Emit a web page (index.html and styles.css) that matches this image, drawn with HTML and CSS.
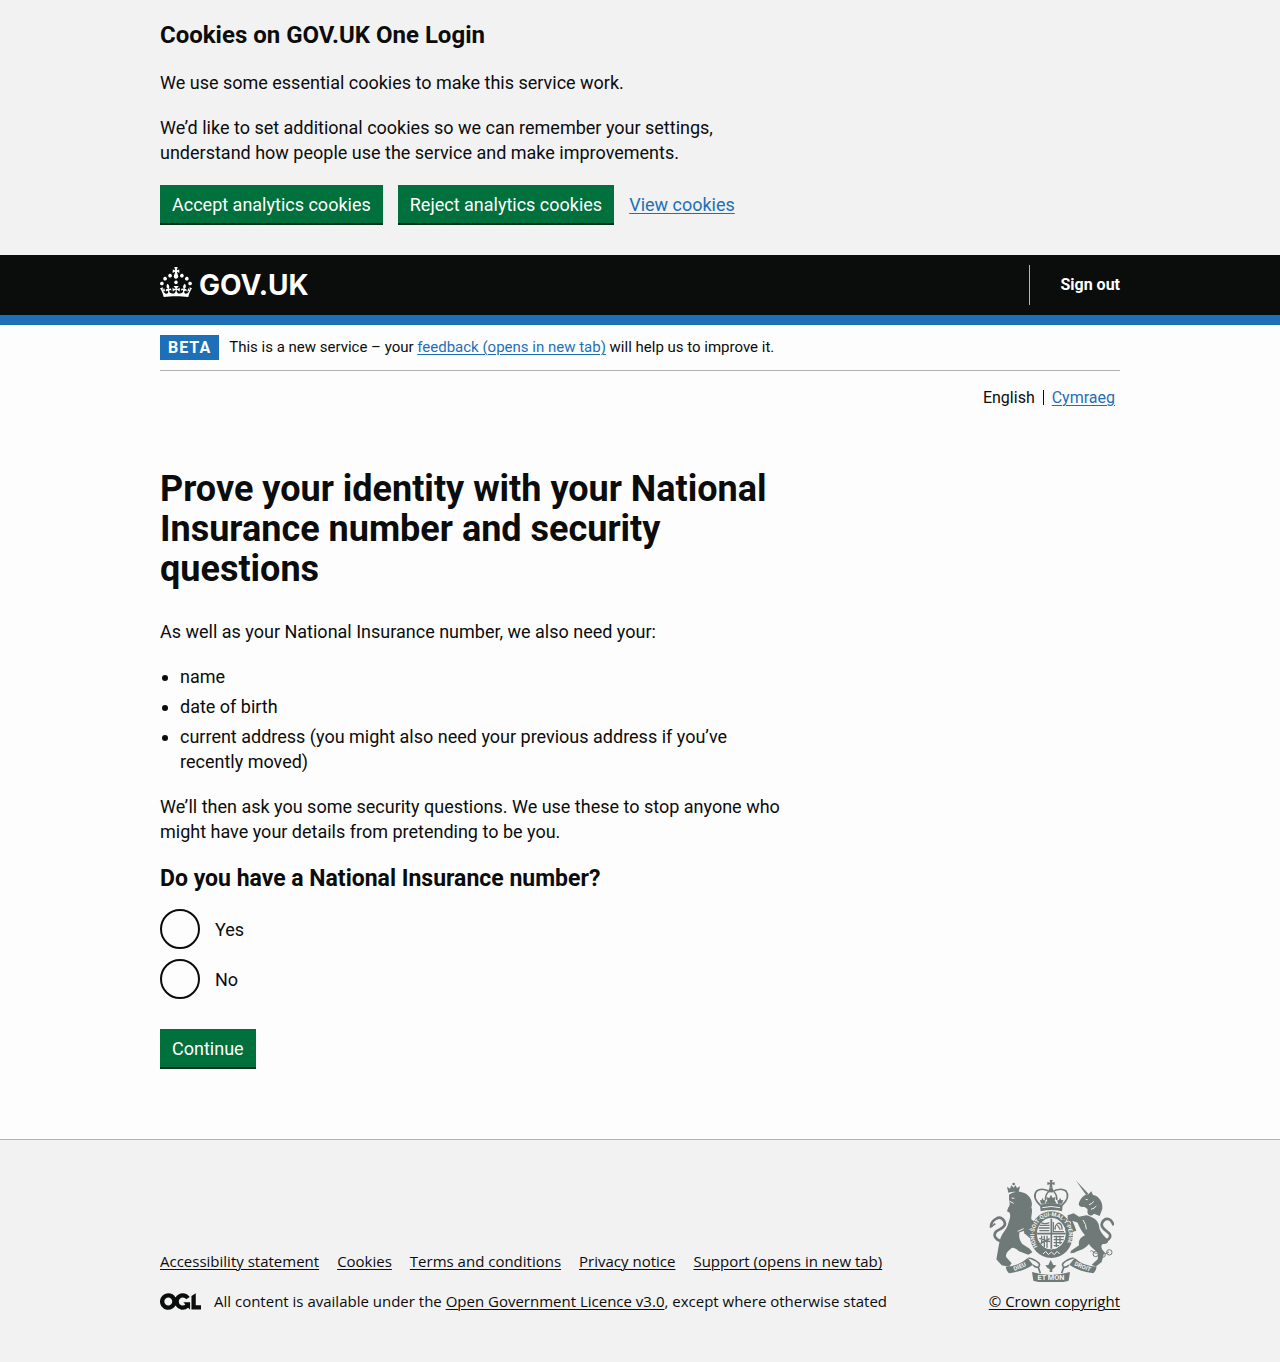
FILE: index.html
```html
<!DOCTYPE html>
<html lang="en">
<head>
<meta charset="utf-8">
<meta name="viewport" content="width=device-width, initial-scale=1">
<title>Prove your identity with your National Insurance number and security questions – GOV.UK One Login</title>
<link rel="stylesheet" href="styles.css">
</head>
<body>
<section class="cookie-banner" aria-label="Cookies on GOV.UK One Login">
  <div class="container">
    <div class="two-thirds">
      <h2 class="heading-m">Cookies on GOV.UK One Login</h2>
      <p>We use some essential cookies to make this service work.</p>
      <p>We’d like to set additional cookies so we can remember your settings, understand how people use the service and make improvements.</p>
    </div>
    <div class="button-group">
      <button type="button" class="button">Accept analytics cookies</button>
      <button type="button" class="button">Reject analytics cookies</button>
      <a class="link" href="#cookies">View cookies</a>
    </div>
  </div>
</section>

<header class="header">
  <div class="container header-inner">
    <a class="logo" href="#home" aria-label="GOV.UK">
      <svg class="logo-crown" viewBox="0 0 32 30" width="32" height="30" aria-hidden="true"><path fill="currentColor" d="M22.6 10.4c-1 .4-2-.1-2.4-1-.4-.9.1-2 1-2.4.9-.4 2 .1 2.4 1s-.1 2-1 2.4m-5.9 6.7c-.9.4-2-.1-2.4-1-.4-.9.1-2 1-2.4.9-.4 2 .1 2.4 1s-.1 2-1 2.4m10.8-3.7c-1 .4-2-.1-2.4-1-.4-.9.1-2 1-2.4.9-.4 2 .1 2.4 1s0 2-1 2.4m3.3 4.8c-1 .4-2-.1-2.4-1-.4-.9.1-2 1-2.4.9-.4 2 .1 2.4 1s-.1 2-1 2.4M17 4.7l2.3 1.2V2.5l-2.3.7-.2-.2.9-3h-3.4l.9 3-.2.2c-.1.1-2.3-.7-2.3-.7v3.4L15 4.7c.1.1.1.2.2.2l-1.3 4c-.1.2-.1.4-.1.6 0 1.1.8 2 1.9 2.2h.7c1-.2 1.9-1.1 1.9-2.1 0-.2 0-.4-.1-.6l-1.3-4c-.1-.2 0-.2.1-.3m-7.6 5.7c.9.4 2-.1 2.4-1 .4-.9-.1-2-1-2.4-.9-.4-2 .1-2.4 1s0 2 1 2.4m-5 3c.9.4 2-.1 2.4-1 .4-.9-.1-2-1-2.4-.9-.4-2 .1-2.4 1s.1 2 1 2.4m-3.2 4.8c.9.4 2-.1 2.4-1 .4-.9-.1-2-1-2.4-.9-.4-2 .1-2.4 1s0 2 1 2.4m14.8 11c4.4 0 8.6.3 12.3.8 1.1-4.5 2.4-7 3.7-8.8l-2.5-.9c.2 1.3.3 1.9 0 2.7-.4-.4-.8-1.1-1.1-2.3l-1.2 4c.7-.5 1.3-.8 2-.9-1.1 2.5-2.6 3.1-3.5 3-1.1-.2-1.7-1.2-1.5-2.1.3-1.2 1.5-1.5 2.1-.1 1.1-2.3-.8-3-2-2.3 1.9-1.9 2.1-3.5.6-5.6-2.1 1.6-2.1 3.2-1.2 5.5-1.2-1.4-3.2-.6-2.5 1.6.9-1.4 2.1-.5 1.9.8-.2 1.1-1.7 2.1-3.5 1.9-2.7-.2-2.9-2.1-2.9-3.6.7-.1 1.9.5 2.9 1.9l.4-4.3c-1.1 1.1-2.1 1.4-3.2 1.4.4-1.2 2.1-3 2.1-3h-5.4s1.7 1.9 2.1 3c-1.1 0-2.1-.2-3.2-1.4l.4 4.3c1-1.4 2.2-2 2.9-1.9-.1 1.5-.2 3.4-2.9 3.6-1.9.2-3.4-.8-3.5-1.9-.2-1.3 1-2.2 1.9-.8.7-2.3-1.2-3-2.5-1.6.9-2.2.9-3.9-1.2-5.5-1.5 2-1.3 3.7.6 5.6-1.2-.7-3.1 0-2 2.3.6-1.4 1.8-1.1 2.1.1.2.9-.3 1.9-1.5 2.1-.9.2-2.4-.5-3.5-3 .6 0 1.2.3 2 .9l-1.2-4c-.3 1.1-.7 1.9-1.1 2.3-.3-.8-.2-1.4 0-2.7l-2.9.9C1.3 23 2.6 25.5 3.7 30c3.7-.5 7.9-.8 12.3-.8"/></svg>
      <span class="logo-text">GOV.UK</span>
    </a>
    <nav class="header-nav" aria-label="Account"><a href="#sign-out">Sign out</a></nav>
  </div>
</header>

<div class="container">
  <div class="phase-banner">
    <strong class="tag">BETA</strong>
    <span>This is a new service – your <a class="link" href="#feedback">feedback (opens in new tab)</a> will help us to improve it.</span>
  </div>
  <nav aria-label="Language">
    <ul class="languages">
      <li>English</li>
      <li><a class="link" href="#cy" lang="cy">Cymraeg</a></li>
    </ul>
  </nav>

  <main class="main two-thirds">
    <h1>Prove your identity with your National Insurance number and security questions</h1>
    <p>As well as your National Insurance number, we also need your:</p>
    <ul class="bullets">
      <li>name</li>
      <li>date of birth</li>
      <li>current address (you might also need your previous address if you’ve recently moved)</li>
    </ul>
    <p>We’ll then ask you some security questions. We use these to stop anyone who might have your details from pretending to be you.</p>
    <form>
      <fieldset>
        <legend>Do you have a National Insurance number?</legend>
        <div class="radio"><input type="radio" name="nino" id="nino-yes" value="yes"><label for="nino-yes">Yes</label></div>
        <div class="radio"><input type="radio" name="nino" id="nino-no" value="no"><label for="nino-no">No</label></div>
      </fieldset>
      <button type="button" class="button">Continue</button>
    </form>
  </main>
</div>

<footer class="footer">
  <div class="container footer-inner">
    <div class="footer-main">
      <ul class="footer-links">
        <li><a href="#accessibility">Accessibility statement</a></li>
        <li><a href="#cookies">Cookies</a></li>
        <li><a href="#terms">Terms and conditions</a></li>
        <li><a href="#privacy">Privacy notice</a></li>
        <li><a href="#support">Support (opens in new tab)</a></li>
      </ul>
      <div class="licence">
        <svg class="ogl" viewBox="0 0 483.2 195.7" width="41" height="17" aria-hidden="true"><path fill="currentColor" d="M421.5 142.8V.1l-50.7 32.3v161.1h112.4v-50.7zm-122.3-9.6A47.12 47.12 0 0 1 221 97.8c0-26 21.1-47.1 47.1-47.1 16.7 0 31.4 8.7 39.7 21.8l42.7-27.2A97.63 97.63 0 0 0 268.1 0c-36.5 0-68.3 20.1-85.1 49.7A98 98 0 0 0 97.8 0C43.9 0 0 43.9 0 97.8s43.9 97.8 97.8 97.8c36.5 0 68.3-20.1 85.1-49.7a97.76 97.76 0 0 0 149.6 25.4l19.4 22.2h3v-87.8h-80l24.3 27.5zM97.8 145c-26 0-47.1-21.1-47.1-47.1s21.1-47.1 47.1-47.1 47.1 21.1 47.1 47.1S123.8 145 97.8 145"/></svg>
        <span>All content is available under the <a href="#licence">Open Government Licence v3.0</a>, except where otherwise stated</span>
      </div>
    </div>
    <a class="copyright" href="#copyright">
      <svg class="arms" viewBox="30 30 375 306" width="125" height="102" aria-hidden="true">
        <defs>
          <path id="garter" d="M176 230A52 57 0 1 1 259 230"/>
        </defs>
        <!-- lion -->
        <g class="arms-fill">
          <path d="M88 68l-4-18 9 6 4-10 7 7 5-8 5 9 9-5-4 18q-16-4-31 1z"/>
          <circle cx="104" cy="42" r="4"/>
          <path d="M90 74C104 63 126 63 138 70C156 80 162 98 157 112C162 124 156 136 157 148L172 160L158 172C152 180 134 184 122 186C118 200 122 212 130 222L152 236L160 247L148 254L120 244C112 236 104 232 98 234C86 244 78 252 82 262L98 280L90 290L68 286L52 268C56 250 58 230 62 214C66 190 84 180 88 160C92 146 96 140 92 128L84 124L88 112C94 108 92 96 90 88Z"/>
          <path d="M132 168L158 182L166 200L152 204L136 190Z"/>
        </g>
        <g class="arms-line">
          <path class="arms-tail" d="M66 214c-16-6-24-16-16-28 8-9 26-10 28-24-1-14-14-24-26-16-12 6-16 14-16 24"/>
          <path d="M33 173l16-12"/>
        </g>
        <path class="arms-cut" d="M92 94l12 6M98 84l8 1M116 184l18-8"/>
        <!-- unicorn -->
        <g class="arms-fill">
          <path d="M290 31l38 40-6 5z"/>
          <path d="M299 102C304 84 316 74 328 73L337 64L342 75C360 78 372 96 370 116L362 138L345 131C335 142 322 136 326 118L316 110C308 112 300 110 299 102Z"/>
          <path d="M266 136L284 130L300 140L322 136C340 140 358 150 360 168C362 184 372 196 384 206C392 216 384 222 372 222C364 226 366 236 376 246L368 276L350 290L338 284L356 268L358 248C346 240 336 232 330 222L322 230C310 240 300 240 286 248L274 250L276 242L300 226C298 212 304 202 318 196C308 184 300 170 296 158L280 152L286 166L292 182L280 186L274 170L276 156L266 150Z"/>
        </g>
        <g class="arms-line">
          <path class="arms-tail" d="M370 216c16-4 28-12 22-24-8-10-22-14-24-26 0-14 12-22 22-18 6 2 10 8 14 18"/>
          <path class="arms-chain" d="M334 244c6-6 10 6 18 6s10-4 18 0 12 0 20-4"/>
          <circle class="arms-chain" cx="350" cy="252" r="8"/>
          <circle class="arms-chain" cx="371" cy="254" r="8"/>
          <circle class="arms-chain" cx="391" cy="247" r="8"/>
        </g>
        <path class="arms-cut" d="M330 104q10-2 14-10M336 118q10-2 16-10M320 88l6 1M312 150q10 14 10 28"/>
        <!-- crown -->
        <g class="arms-fill">
          <path d="M212 30h9l-2 8 8-2v9l-8-2 2 10h-10l2-10-8 2v-9l9 2z"/>
          <circle cx="216" cy="60" r="7"/>
          <path d="M183 104q34-9 68 0l-2 20q-32-8-64 0z"/>
          <path d="M216 74l5 10 9-3-3 10 6 10h-34l6-10-3-10 9 3zM190 83l4 8 6-1-2 11h-12l-3-11 5 1zM243 83l4 8 6-1-4 11h-12l-2-11 5 1z"/>
        </g>
        <path class="arms-line" d="M184 106q-26-25-11-43 16-12 42 3M249 106q26-25 12-43-16-12-44 3M208 66q-10 10-8 24M225 66q10 10 8 24"/>
        <path class="arms-cut" d="M190 113q26-7 53 0"/>
        <!-- garter and shield -->
        <ellipse class="arms-fill" cx="217" cy="194" rx="65" ry="70"/>
        <text class="arms-motto arms-garter"><textPath href="#garter">HONI·SOIT·QUI·MAL·Y·PENSE</textPath></text>
        <ellipse class="arms-shield" cx="217" cy="191" rx="42" ry="46"/>
        <path class="arms-line" d="M217 146v90M174 191h86"/>
        <path class="arms-detail" d="M182 166h30M179 174h33M181 182h30M186 158q12 6 25 0M223 156v29h32M229 179q-3-14 10-20 11 4 10 20M235 165l9 14M188 197v26M196 197v34M204 197v36M181 205l32 10M184 220l28-14M224 200h31M224 209h30M224 218h25M224 227h16M232 197v34M243 197v26"/>
        <path class="arms-cut" d="M192 252l8-8 8 10 9-8 9 8 8-10 8 8"/>
        <!-- mottoes on the scroll -->
        <g class="arms-fill">
          <path d="M80 290q38 0 66-26l16 20q-28 20-72 26-8-8-10-20z"/>
          <path d="M353 290q-38 0-66-26l-16 20q28 20 72 26 8-8 10-20z"/>
          <path d="M159 306q57 18 114 0l-4 26q-53 15-106 0z"/>
          <path d="M215 270l8 15 9 1-7 9-5 2v9h-8v-9l-6-2-7-9 9-1z"/>
        </g>
        <path class="arms-line" d="M148 264q20 4 32 16 4 8-4 12-8 0-14-7M284 264q-20 4-32 16-4 8 4 12 8 0 14-7M178 292l6 18M254 292l-6 18"/>
        <text class="arms-motto" transform="rotate(-22 122 290)" x="122" y="296">DIEU</text>
        <text class="arms-motto" transform="rotate(22 311 290)" x="311" y="296">DROIT</text>
        <text class="arms-motto arms-motto-large" x="216" y="331">ET MON</text>
      </svg>
      <span>© Crown copyright</span>
    </a>
  </div>
</footer>
</body>
</html>
```
FILE: styles.css
```css
:root {
  --text: #0b0c0c;
  --link: #1d70b8;
  --green: #00703c;
  --panel: #f2f2f2;
  --arms: #6f7a78;
}

* { box-sizing: border-box; }

body {
  margin: 0;
  background: #fdfdfd;
  color: var(--text);
  font: 18px/25px Roboto, Arial, sans-serif;
}

p { margin: 0 0 20px; }
a { color: inherit; text-underline-offset: 2px; text-decoration-thickness: 1px; }
.link { color: var(--link); }

.container { max-width: 960px; margin: 0 auto; }
.two-thirds { max-width: 630px; }

.cookie-banner { background: var(--panel); padding: 20px 0 30px; }
.heading-m { margin: 0 0 20px; font-size: 24px; line-height: 30px; }
.button-group { display: flex; flex-wrap: wrap; align-items: baseline; gap: 15px; }

.button {
  height: 40px;
  padding: 0 12px;
  border: 0;
  border-bottom: 2px solid #002d18;
  background: var(--green);
  color: #fff;
  font: inherit;
}

.header { background: var(--text); border-bottom: 10px solid var(--link); color: #fff; }
.header-inner { display: flex; justify-content: space-between; align-items: center; height: 60px; }
.logo { display: flex; align-items: center; gap: 7px; text-decoration: none; }
.logo-crown { margin-bottom: 6px; }
.logo-text { font: 700 28px/30px Inter, sans-serif; }
.header-nav {
  padding-left: 30px;
  border-left: 1px solid #b1b4b6;
  font-size: 16px;
  font-weight: 700;
  line-height: 40px;
}
.header-nav a { text-decoration: none; }

.phase-banner {
  display: flex;
  gap: 10px;
  padding: 10px 0;
  border-bottom: 1px solid #b1b4b6;
  font-size: 15px;
}
.tag { padding: 0 8px; background: var(--link); color: #fff; font-size: 16px; letter-spacing: 1px; }

.languages {
  display: flex;
  justify-content: flex-end;
  margin: 0;
  padding: 19px 5px 0 0;
  list-style: none;
  font-size: 16px;
  line-height: 15px;
}
.languages li + li { margin-left: 8px; padding-left: 8px; border-left: 1px solid var(--text); }

.main { padding: 64px 0 70px; }
h1 { margin: 0 0 30px; font-size: 36px; line-height: 40px; }
.bullets { margin: 0 0 20px; padding-left: 20px; }
.bullets li + li { margin-top: 5px; }
fieldset { margin: 0 0 30px; padding: 0; border: 0; }
legend { margin-bottom: 15px; padding: 0; font-size: 23px; font-weight: 700; line-height: 30px; }
.radio { display: flex; align-items: center; gap: 15px; }
.radio + .radio { margin-top: 10px; }
.radio input {
  appearance: none;
  width: 40px;
  height: 40px;
  margin: 0;
  border: 2px solid var(--text);
  border-radius: 50%;
}
.radio input:checked { background: radial-gradient(var(--text) 10px, transparent 11px); }

.footer {
  padding: 40px 0 51px;
  border-top: 1px solid #b1b4b6;
  background: var(--panel);
  font: 15px/20px "Open Sans", Arial, sans-serif;
}
.footer-inner { display: flex; justify-content: space-between; align-items: flex-end; }
.footer-links { display: flex; flex-wrap: wrap; gap: 10px 18px; margin: 0 0 20px; padding: 0; list-style: none; }
.licence { display: flex; align-items: center; gap: 13px; }
.copyright { display: flex; flex-direction: column; gap: 9px; }

.arms-fill { fill: var(--arms); }
.arms-line { fill: none; stroke: var(--arms); stroke-width: 5; }
.arms-tail { stroke-width: 8; }
.arms-chain { stroke-width: 3; }
.arms-cut { fill: none; stroke: var(--panel); stroke-width: 3; }
.arms-shield { fill: var(--panel); stroke: var(--panel); stroke-width: 3; }
.arms-detail { fill: none; stroke: var(--arms); stroke-width: 4; }
.arms-motto { fill: var(--panel); font: 700 18px Roboto, sans-serif; text-anchor: middle; }
.arms-garter { font-size: 17px; text-anchor: start; }
.arms-motto-large { font-size: 22px; }
```
